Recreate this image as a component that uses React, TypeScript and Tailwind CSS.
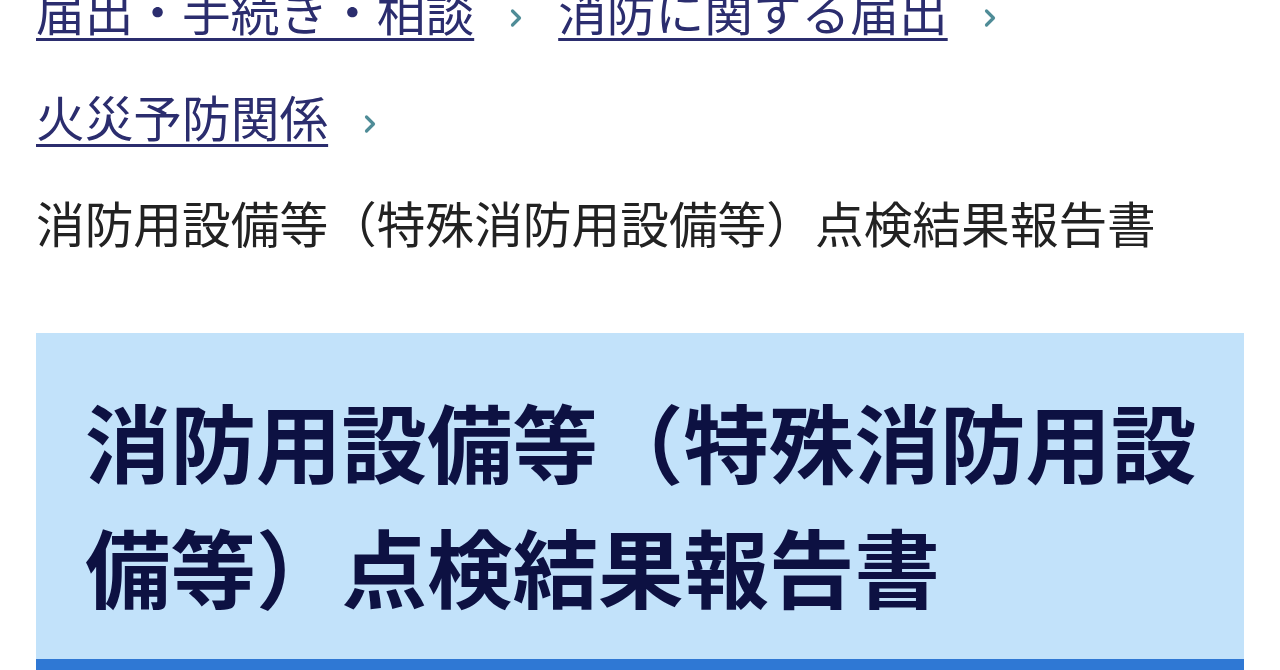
const FONT = { fontFamily: '"Noto Sans CJK JP", "Noto Sans", sans-serif' };

function Chevron() {
  return (
    <svg
      viewBox="0 0 12 20"
      className="inline-block w-[12px] h-[20px] mx-[36px] align-middle"
      fill="none"
      stroke="#4f8c97"
      strokeWidth="3.2"
      strokeLinecap="round"
      strokeLinejoin="round"
    >
      <path d="M2.5 3 L9.5 10 L2.5 17" />
    </svg>
  );
}

const crumbs = ["届出・手続き・相談", "消防に関する届出", "火災予防関係"];

export default function App() {
  return (
    <div className="w-[1280px] h-[670px] overflow-hidden bg-white" style={FONT}>
      <div className="pl-[36px] pr-[36px] -mt-[43px]">
        {/* breadcrumbs */}
        <nav className="text-[48.7px] leading-[106px]">
          {crumbs.map((c) => (
            <span key={c} className="whitespace-nowrap">
              <a
                href="#"
                className="text-[#2b2d6e] underline decoration-[3px] underline-offset-[7px]"
              >
                {c}
              </a>
              <Chevron />
            </span>
          ))}
          <div className="text-[#222222] whitespace-nowrap">
            消防用設備等（特殊消防用設備等）点検結果報告書
          </div>
        </nav>

        {/* page title */}
        <div className="mt-[58px] w-[1208px] bg-[#c2e2fa]">
          <h1 className="pl-[49px] pr-[36px] pt-[45px] pb-[31px] text-[85.5px] leading-[125px] font-bold text-[#0d1142]">
            消防用設備等（特殊消防用設備等）点検結果報告書
          </h1>
          <div className="h-[12px] bg-[#2f78d4]" />
        </div>
      </div>
    </div>
  );
}
